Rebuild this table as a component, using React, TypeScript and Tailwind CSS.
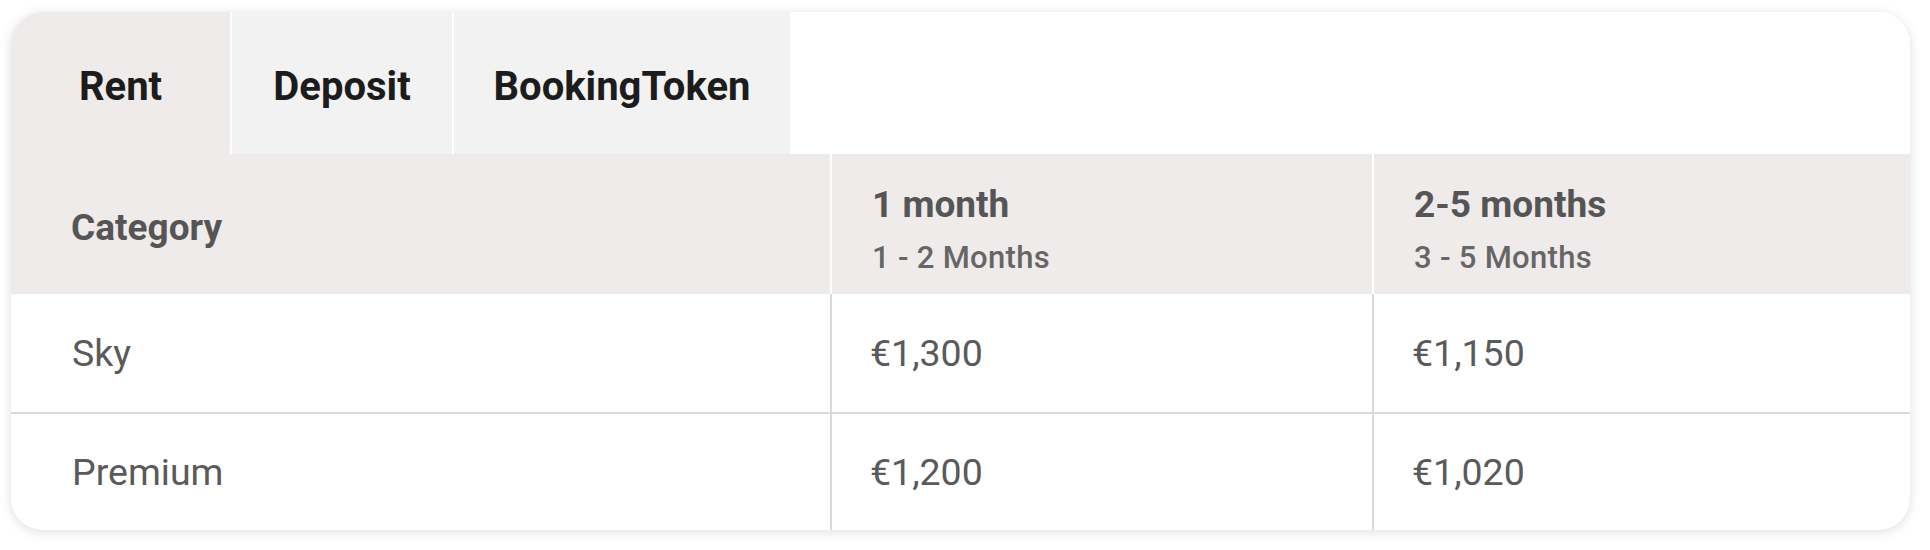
import React from "react";

const rows = [
  { name: "Sky", a: "€1,300", b: "€1,150" },
  { name: "Premium", a: "€1,200", b: "€1,020" },
];

export default function App() {
  return (
    <div
      className="w-[1930px] h-[550px] bg-white pl-[11px] pt-[12px]"
      style={{ fontFamily: "Roboto, 'Noto Sans', sans-serif" }}
    >
      <div className="w-[1899px] h-[518px] rounded-[32px] bg-white overflow-hidden shadow-[0_2px_12px_rgba(0,0,0,0.13)] flex flex-col">
        {/* Tabs */}
        <div className="flex h-[142px] shrink-0">
          <div className="w-[219px] bg-[#f0ebeb] flex items-center justify-center pt-[7px] text-[40px] font-bold text-[#1c1c1c]">
            Rent
          </div>
          <div className="w-[2px] bg-white" />
          <div className="w-[220px] bg-[#f2f2f2] flex items-center justify-center pt-[7px] text-[40px] font-bold text-[#1c1c1c]">
            Deposit
          </div>
          <div className="w-[2px] bg-white" />
          <div className="w-[336px] bg-[#f2f2f2] flex items-center justify-center pt-[7px] text-[40px] font-bold text-[#1c1c1c]">
            BookingToken
          </div>
          <div className="flex-1 bg-white" />
        </div>

        {/* Header */}
        <div className="grid grid-cols-[819px_542px_538px] h-[140px] shrink-0 bg-[#f0ebeb]">
          <div className="flex items-center pl-[60px] pt-[7px] text-[37px] font-bold text-[#555555]">
            Category
          </div>
          <div className="border-l-2 border-white flex flex-col justify-center pl-[40px] pt-[10px]">
            <div className="text-[37px] font-bold text-[#555555] leading-[44px]">1 month</div>
            <div className="text-[31px] font-medium text-[#666666] leading-[36px] mt-[13px] tracking-[0.3px]">
              1 - 2 Months
            </div>
          </div>
          <div className="border-l-2 border-white flex flex-col justify-center pl-[40px] pt-[10px]">
            <div className="text-[37px] font-bold text-[#555555] leading-[44px]">2-5 months</div>
            <div className="text-[31px] font-medium text-[#666666] leading-[36px] mt-[13px] tracking-[0.3px]">
              3 - 5 Months
            </div>
          </div>
        </div>

        {/* Body */}
        {rows.map((r, i) => (
          <div
            key={r.name}
            className={
              i === 0
                ? "grid grid-cols-[819px_542px_538px] h-[118px] shrink-0"
                : "grid grid-cols-[819px_542px_538px] h-[118px] shrink-0 border-t-2 border-[#d9d9d9]"
            }
          >
            <div className="flex items-center pl-[61px] text-[37.5px] text-[#5a5a5a]">{r.name}</div>
            <div className="border-l-2 border-[#d9d9d9] flex items-center pl-[38px] text-[37.5px] text-[#5a5a5a]">
              {r.a}
            </div>
            <div className="border-l-2 border-[#d9d9d9] flex items-center pl-[38px] text-[37.5px] text-[#5a5a5a]">
              {r.b}
            </div>
          </div>
        ))}
      </div>
    </div>
  );
}
